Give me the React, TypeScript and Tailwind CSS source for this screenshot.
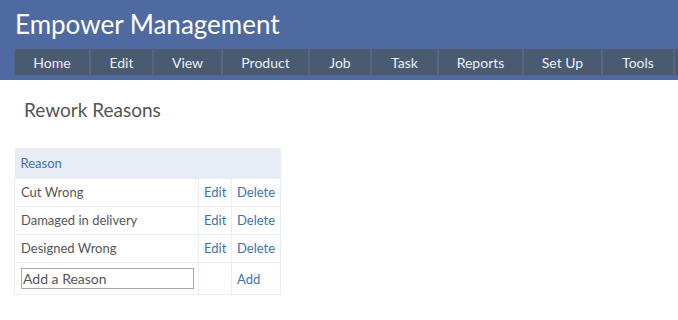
const NAV: [string, string][] = [
  ["Home", "w-[76px]"],
  ["Edit", "w-[63px]"],
  ["View", "w-[69px]"],
  ["Product", "w-[87px]"],
  ["Job", "w-[62px]"],
  ["Task", "w-[67px]"],
  ["Reports", "w-[85px]"],
  ["Set Up", "w-[79px]"],
  ["Tools", "w-[72px]"],
];
const REASONS = ["Cut Wrong", "Damaged in delivery", "Designed Wrong"];

export default function App() {
  return (
    <div className="w-[678px] h-[320px] overflow-hidden bg-white font-['Lato',sans-serif]">
      <div className="bg-[#4f6aa1] h-[80px] pl-[14px] pt-[4px] flex flex-col">
        <h1 className="text-white text-[26px] leading-[40px] pl-px">Empower Management</h1>
        <div className="mt-[5px] h-[26px] flex bg-[#4a5a70] border-l border-[#56667e]">
          {NAV.map(([n, w]) => (
            <div key={n} className={`${w} shrink-0 h-full flex items-center justify-center whitespace-nowrap text-[14px] text-[#eaf0f8] border-r-2 border-[#56667e]`}>
              {n}
            </div>
          ))}
        </div>
      </div>
      <div className="pl-[14px]">
        <h2 className="text-[19px] text-[#555] pl-[10px] pt-[18px] leading-[24px]">Rework Reasons</h2>
        <table className="mt-[26px] w-[266px] border-collapse text-[13px] text-[#555] table-fixed">
          <colgroup>
            <col className="w-[184px]" />
            <col className="w-[33px]" />
            <col className="w-[49px]" />
          </colgroup>
          <thead>
            <tr className="bg-[#e8edf5] h-[30px]">
              <th colSpan={3} className="text-left font-normal text-[#3b73ad] px-[6px] pt-px">Reason</th>
            </tr>
          </thead>
          <tbody>
            {REASONS.map((r) => (
              <tr key={r} className="h-[28px]">
                <td className="border border-[#e8edf5] px-[6px] pt-[2px]">{r}</td>
                <td className="border border-[#e8edf5] px-[5px] pt-[2px] text-[#3b73ad]">Edit</td>
                <td className="border border-[#e8edf5] px-[5px] pt-[2px] text-[#3b73ad]">Delete</td>
              </tr>
            ))}
            <tr className="h-[32px]">
              <td className="border border-[#e8edf5] px-[6px] pt-px">
                <input placeholder="Add a Reason" className="w-[173px] h-[21px] border border-[#a9a9a9] px-px text-[14px] placeholder:text-[#555] outline-none" />
              </td>
              <td className="border border-[#e8edf5]"></td>
              <td className="border border-[#e8edf5] px-[5px] text-[#3b73ad] pt-[4px]">Add</td>
            </tr>
          </tbody>
        </table>
      </div>
    </div>
  );
}
